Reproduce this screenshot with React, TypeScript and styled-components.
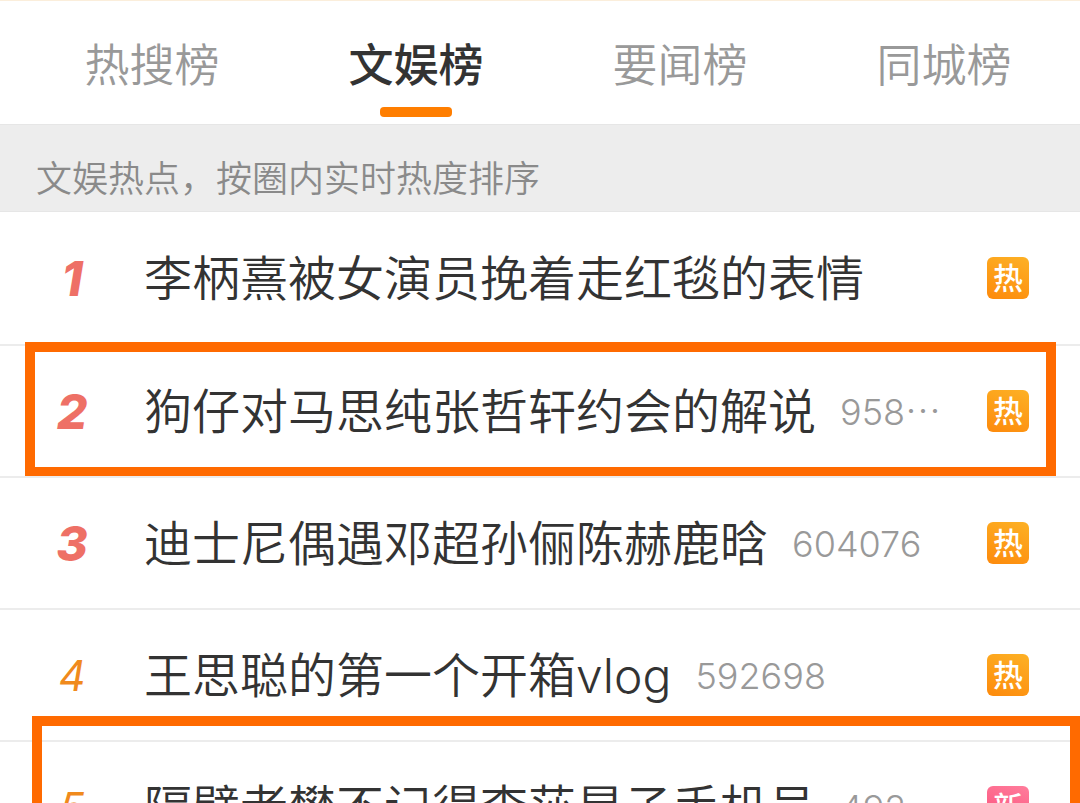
import React, { useState } from "react";
import styled, { createGlobalStyle, css } from "styled-components";

const GlobalStyle = createGlobalStyle`
  * { box-sizing: border-box; }
  body {
    margin: 0;
    background: #fff;
    color: #333;
    font-family: Inter, "Noto Sans CJK SC", sans-serif;
    font-weight: 350;
  }
`;

const Page = styled.main`
  display: flex;
  flex-direction: column;
  height: 100vh;
  overflow: hidden;
`;

const TabBar = styled.nav`
  flex: none;
  display: flex;
  height: 124px;
  padding: 0 4px 0 20px;
  border-top: 1px solid #fbeedb;
`;

const Tab = styled.button<{ $active: boolean }>`
  flex: 1;
  display: flex;
  flex-direction: column;
  align-items: center;
  justify-content: flex-end;
  gap: 12px;
  padding: 0 0 7px;
  border: 0;
  background: none;
  color: ${(p) => (p.$active ? "#333" : "#999")};
  font-family: "Noto Sans CJK SC", sans-serif;
  font-size: 45px;
  font-weight: ${(p) => (p.$active ? 500 : 350)};
  line-height: 64px;
  cursor: pointer;

  &::after {
    content: "";
    width: 72px;
    height: 10px;
    border-radius: 4px;
    background: ${(p) => (p.$active ? "#ff7e00" : "transparent")};
  }
`;

const Notice = styled.p`
  flex: none;
  margin: 0;
  padding: 20px 36px 0;
  height: 88px;
  border-top: 1px solid #e6e6e6;
  border-bottom: 1px solid #e6e6e6;
  background: #ededed;
  color: #8a8a8a;
  font-family: "Noto Sans CJK SC", sans-serif;
  font-size: 36px;
  line-height: 62px;
`;

const List = styled.ol`
  margin: 0;
  padding: 0;
  list-style: none;
`;

const Row = styled.li`
  position: relative;
  display: flex;
  align-items: center;
  height: 132px;
  padding-right: 51px;

  & + & {
    border-top: 2px solid #ececec;
  }
`;

const Frame = styled.span<{ $inset: string }>`
  position: absolute;
  inset: ${(p) => p.$inset};
  border: 10px solid #ff6a00;
  pointer-events: none;
`;

const Rank = styled.span<{ $top: boolean }>`
  flex: none;
  width: 144px;
  text-align: center;
  font-style: italic;
  ${(p) =>
    p.$top
      ? css`
          color: #ee7066;
          font-size: 48px;
          font-weight: 800;
        `
      : css`
          color: #f08a1c;
          font-size: 42px;
          font-weight: 400;
        `}
`;

const Title = styled.a`
  flex: none;
  padding-top: 2px;
  color: #333;
  font-size: 48px;
  line-height: 70px;
  text-decoration: none;
  white-space: nowrap;
`;

const Count = styled.span`
  margin-left: 24px;
  padding-top: 2px;
  color: #999;
  font-size: 36px;
  font-weight: 300;
  line-height: 70px;
  white-space: nowrap;
`;

const Badge = styled.span<{ $fresh: boolean }>`
  flex: none;
  display: grid;
  place-items: center;
  width: 42px;
  height: 42px;
  margin-left: auto;
  border-radius: 6px;
  background: ${(p) =>
    p.$fresh
      ? "linear-gradient(200deg, #ff7d9c, #fb4a76)"
      : "linear-gradient(200deg, #fdb125, #fd8a0c)"};
  color: #fff;
  font-family: "Noto Sans CJK SC", sans-serif;
  font-size: 30px;
  font-weight: 500;
  line-height: 38px;
  padding-bottom: 4px;
`;

const tabs = ["热搜榜", "文娱榜", "要闻榜", "同城榜"];

type Topic = { title: string; count?: string; tag: string; frame?: string };

const topics: Topic[] = [
  { title: "李柄熹被女演员挽着走红毯的表情", tag: "热" },
  { title: "狗仔对马思纯张哲轩约会的解说", count: "958⋯", tag: "热", frame: "-4px 24px -1px 25px" },
  { title: "迪士尼偶遇邓超孙俪陈赫鹿晗", count: "604076", tag: "热" },
  { title: "王思聪的第一个开箱vlog", count: "592698", tag: "热" },
  { title: "隔壁老樊不记得李莎旻子手机号", count: "492⋯", tag: "新", frame: "-26px 0 -10px 32px" },
];

export default function App() {
  const [active, setActive] = useState(1);
  return (
    <>
      <GlobalStyle />
      <Page>
        <TabBar>
          {tabs.map((name, i) => (
            <Tab key={name} type="button" $active={i === active} onClick={() => setActive(i)}>
              {name}
            </Tab>
          ))}
        </TabBar>
        <Notice>文娱热点，按圈内实时热度排序</Notice>
        <List>
          {topics.map((t, i) => (
            <Row key={t.title}>
              <Rank $top={i < 3}>{i + 1}</Rank>
              <Title href="#">{t.title}</Title>
              {t.count && <Count>{t.count}</Count>}
              <Badge $fresh={t.tag === "新"}>{t.tag}</Badge>
              {t.frame && <Frame $inset={t.frame} />}
            </Row>
          ))}
        </List>
      </Page>
    </>
  );
}
